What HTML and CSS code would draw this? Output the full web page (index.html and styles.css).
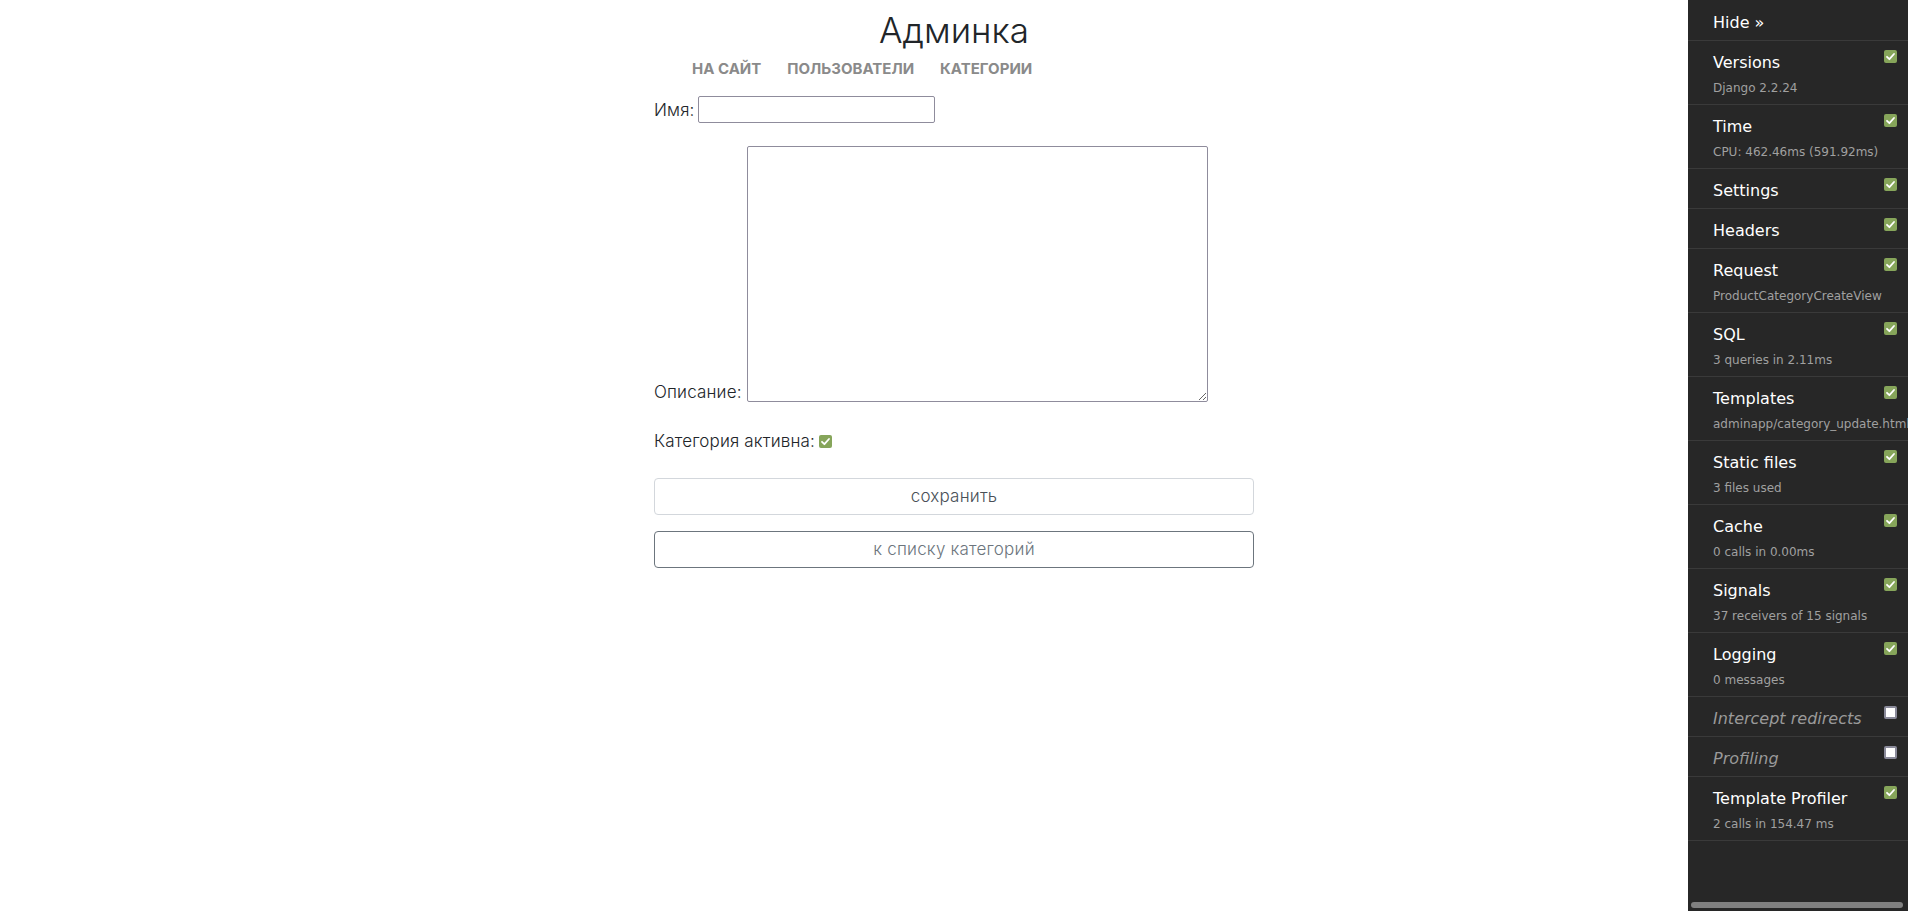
FILE: index.html
```html
<!DOCTYPE html>
<html lang="ru">
<head>
<meta charset="utf-8">
<title>Админка</title>
<link rel="stylesheet" href="styles.css">
</head>
<body>
<div class="page">
  <h1 class="title">Админка</h1>
  <nav class="menu">
    <a class="menu-link" href="#">НА САЙТ</a>
    <a class="menu-link" href="#">ПОЛЬЗОВАТЕЛИ</a>
    <a class="menu-link" href="#">КАТЕГОРИИ</a>
  </nav>
  <form class="form">
    <div class="row row-name">
      <label class="lbl" for="name">Имя:</label>
      <input class="inp" id="name" type="text">
    </div>
    <div class="row row-desc">
      <label class="lbl lbl-desc" for="desc">Описание:</label>
      <textarea class="txt" id="desc"></textarea>
    </div>
    <div class="row row-active">
      <span class="lbl">Категория активна:</span>
      <span class="cb cb-on"><svg viewBox="0 0 13 13" width="13" height="13"><polyline points="3,6.8 5.4,9.2 10,4" fill="none" stroke="#fff" stroke-width="1.8" stroke-linecap="round" stroke-linejoin="round"/></svg></span>
    </div>
    <button class="btn btn-save" type="button">сохранить</button>
    <a class="btn btn-back" href="#">к списку категорий</a>
  </form>
</div>

<aside class="djdt">
  <ul class="djdt-list">
    <li class="djdt-item djdt-hide"><span class="djdt-title">Hide »</span></li>
    <li class="djdt-item djdt-has-sub"><span class="cb cb-on cb-tb"><svg viewBox="0 0 13 13" width="13" height="13"><polyline points="3,6.8 5.4,9.2 10,4" fill="none" stroke="#fff" stroke-width="1.8" stroke-linecap="round" stroke-linejoin="round"/></svg></span><span class="djdt-title">Versions</span><small class="djdt-sub">Django 2.2.24</small></li>
    <li class="djdt-item djdt-has-sub"><span class="cb cb-on cb-tb"><svg viewBox="0 0 13 13" width="13" height="13"><polyline points="3,6.8 5.4,9.2 10,4" fill="none" stroke="#fff" stroke-width="1.8" stroke-linecap="round" stroke-linejoin="round"/></svg></span><span class="djdt-title">Time</span><small class="djdt-sub">CPU: 462.46ms (591.92ms)</small></li>
    <li class="djdt-item"><span class="cb cb-on cb-tb"><svg viewBox="0 0 13 13" width="13" height="13"><polyline points="3,6.8 5.4,9.2 10,4" fill="none" stroke="#fff" stroke-width="1.8" stroke-linecap="round" stroke-linejoin="round"/></svg></span><span class="djdt-title">Settings</span></li>
    <li class="djdt-item"><span class="cb cb-on cb-tb"><svg viewBox="0 0 13 13" width="13" height="13"><polyline points="3,6.8 5.4,9.2 10,4" fill="none" stroke="#fff" stroke-width="1.8" stroke-linecap="round" stroke-linejoin="round"/></svg></span><span class="djdt-title">Headers</span></li>
    <li class="djdt-item djdt-has-sub"><span class="cb cb-on cb-tb"><svg viewBox="0 0 13 13" width="13" height="13"><polyline points="3,6.8 5.4,9.2 10,4" fill="none" stroke="#fff" stroke-width="1.8" stroke-linecap="round" stroke-linejoin="round"/></svg></span><span class="djdt-title">Request</span><small class="djdt-sub">ProductCategoryCreateView</small></li>
    <li class="djdt-item djdt-has-sub"><span class="cb cb-on cb-tb"><svg viewBox="0 0 13 13" width="13" height="13"><polyline points="3,6.8 5.4,9.2 10,4" fill="none" stroke="#fff" stroke-width="1.8" stroke-linecap="round" stroke-linejoin="round"/></svg></span><span class="djdt-title">SQL</span><small class="djdt-sub">3 queries in 2.11ms</small></li>
    <li class="djdt-item djdt-has-sub"><span class="cb cb-on cb-tb"><svg viewBox="0 0 13 13" width="13" height="13"><polyline points="3,6.8 5.4,9.2 10,4" fill="none" stroke="#fff" stroke-width="1.8" stroke-linecap="round" stroke-linejoin="round"/></svg></span><span class="djdt-title">Templates</span><small class="djdt-sub">adminapp/category_update.html</small></li>
    <li class="djdt-item djdt-has-sub"><span class="cb cb-on cb-tb"><svg viewBox="0 0 13 13" width="13" height="13"><polyline points="3,6.8 5.4,9.2 10,4" fill="none" stroke="#fff" stroke-width="1.8" stroke-linecap="round" stroke-linejoin="round"/></svg></span><span class="djdt-title">Static files</span><small class="djdt-sub">3 files used</small></li>
    <li class="djdt-item djdt-has-sub"><span class="cb cb-on cb-tb"><svg viewBox="0 0 13 13" width="13" height="13"><polyline points="3,6.8 5.4,9.2 10,4" fill="none" stroke="#fff" stroke-width="1.8" stroke-linecap="round" stroke-linejoin="round"/></svg></span><span class="djdt-title">Cache</span><small class="djdt-sub">0 calls in 0.00ms</small></li>
    <li class="djdt-item djdt-has-sub"><span class="cb cb-on cb-tb"><svg viewBox="0 0 13 13" width="13" height="13"><polyline points="3,6.8 5.4,9.2 10,4" fill="none" stroke="#fff" stroke-width="1.8" stroke-linecap="round" stroke-linejoin="round"/></svg></span><span class="djdt-title">Signals</span><small class="djdt-sub">37 receivers of 15 signals</small></li>
    <li class="djdt-item djdt-has-sub"><span class="cb cb-on cb-tb"><svg viewBox="0 0 13 13" width="13" height="13"><polyline points="3,6.8 5.4,9.2 10,4" fill="none" stroke="#fff" stroke-width="1.8" stroke-linecap="round" stroke-linejoin="round"/></svg></span><span class="djdt-title">Logging</span><small class="djdt-sub">0 messages</small></li>
    <li class="djdt-item"><span class="cb cb-off cb-tb"></span><span class="djdt-title djdt-disabled">Intercept redirects</span></li>
    <li class="djdt-item"><span class="cb cb-off cb-tb"></span><span class="djdt-title djdt-disabled">Profiling</span></li>
    <li class="djdt-item djdt-has-sub"><span class="cb cb-on cb-tb"><svg viewBox="0 0 13 13" width="13" height="13"><polyline points="3,6.8 5.4,9.2 10,4" fill="none" stroke="#fff" stroke-width="1.8" stroke-linecap="round" stroke-linejoin="round"/></svg></span><span class="djdt-title">Template Profiler</span><small class="djdt-sub">2 calls in 154.47 ms</small></li>
  </ul>
  <div class="djdt-scroll"></div>
</aside>
</body>
</html>
```

FILE: styles.css
```css
html, body {
  margin: 0;
  padding: 0;
  background: #fff;
}

body {
  font-family: "Inter", "Liberation Sans", sans-serif;
  color: #212529;
}

.page {
  width: 600px;
  margin: 0 auto;
}

.title {
  margin: 0;
  padding-top: 10px;
  font-size: 35px;
  line-height: 40px;
  font-weight: 300;
  text-align: center;
  color: #212529;
}

.menu {
  display: flex;
  gap: 26px;
  padding-left: 38px;
  margin-top: 9px;
}

.menu-link {
  font-size: 15px;
  line-height: 20px;
  font-weight: 700;
  color: #8a8a8a;
  text-decoration: none;
}

.form {
  margin-top: 17px;
}

.row {
  display: flex;
  align-items: flex-end;
  gap: 4px;
}

.row-name {
  align-items: center;
  gap: 3px;
}

.lbl {
  font-size: 17px;
  line-height: 20px;
  font-weight: 300;
  letter-spacing: 0.15px;
}

.lbl-desc {
  margin-bottom: 0;
}

.inp {
  box-sizing: border-box;
  width: 237px;
  height: 27px;
  border: 1px solid #8f8c9c;
  border-radius: 2px;
  margin: 0;
  padding: 1px 4px;
  font: 14px "Inter", sans-serif;
}

.row-desc {
  margin-top: 23px;
  gap: 5px;
}

.txt {
  box-sizing: border-box;
  width: 461px;
  height: 256px;
  border: 1px solid #8f8c9c;
  border-radius: 2px;
  margin: 0;
  padding: 2px;
  font: 14px "Inter", sans-serif;
}

.row-active {
  margin-top: 27px;
  align-items: center;
  height: 24px;
  gap: 4px;
}

.cb {
  box-sizing: border-box;
  display: inline-block;
  width: 13px;
  height: 13px;
  border-radius: 2px;
}

.cb svg {
  display: block;
}

.cb-on {
  background: #86a55a;
}

.cb-off {
  background: #fff;
  border: 2px solid #8a8a9a;
}

.btn {
  box-sizing: border-box;
  display: block;
  width: 600px;
  height: 37px;
  margin: 0;
  padding: 0;
  border-radius: 4px;
  background: #fff;
  font: 300 17px/35px "Inter", sans-serif;
  letter-spacing: 0.2px;
  text-align: center;
  text-decoration: none;
  cursor: pointer;
}

.btn-save {
  margin-top: 25px;
  border: 1px solid #d3d7dc;
  color: #495057;
}

.btn-back {
  margin-top: 16px;
  border: 1px solid #6c757d;
  color: #6c757d;
}

/* debug toolbar */
.djdt {
  position: fixed;
  top: 0;
  right: 0;
  width: 220px;
  height: 911px;
  background: #272727;
  display: flex;
  flex-direction: column;
  overflow: hidden;
  font-family: "DejaVu Sans", sans-serif;
}

.djdt-list {
  list-style: none;
  margin: 0;
  padding: 0;
}

.djdt-item {
  padding: 10px 10px 5px 25px;
  font-size: 16px;
  line-height: 24px;
  white-space: nowrap;
  border-bottom: 1px solid #3a3a3a;
  color: #fff;
}

.djdt-has-sub {
  padding-bottom: 4px;
}

.djdt-hide {
  padding-top: 11px;
}

.djdt-title {
  color: #fff;
}

.djdt-disabled {
  font-style: italic;
  color: #9a9a9a;
}

.djdt-sub {
  display: block;
  padding-top: 1px;
  font-size: 12px;
  line-height: 24px;
  color: #a0a0a0;
}

.cb-tb {
  float: right;
  margin-top: -1px;
  margin-right: 1px;
}

.djdt-scroll {
  margin: auto 5px 3px 3px;
  height: 6px;
  border-radius: 3px;
  background: #808080;
}
```
